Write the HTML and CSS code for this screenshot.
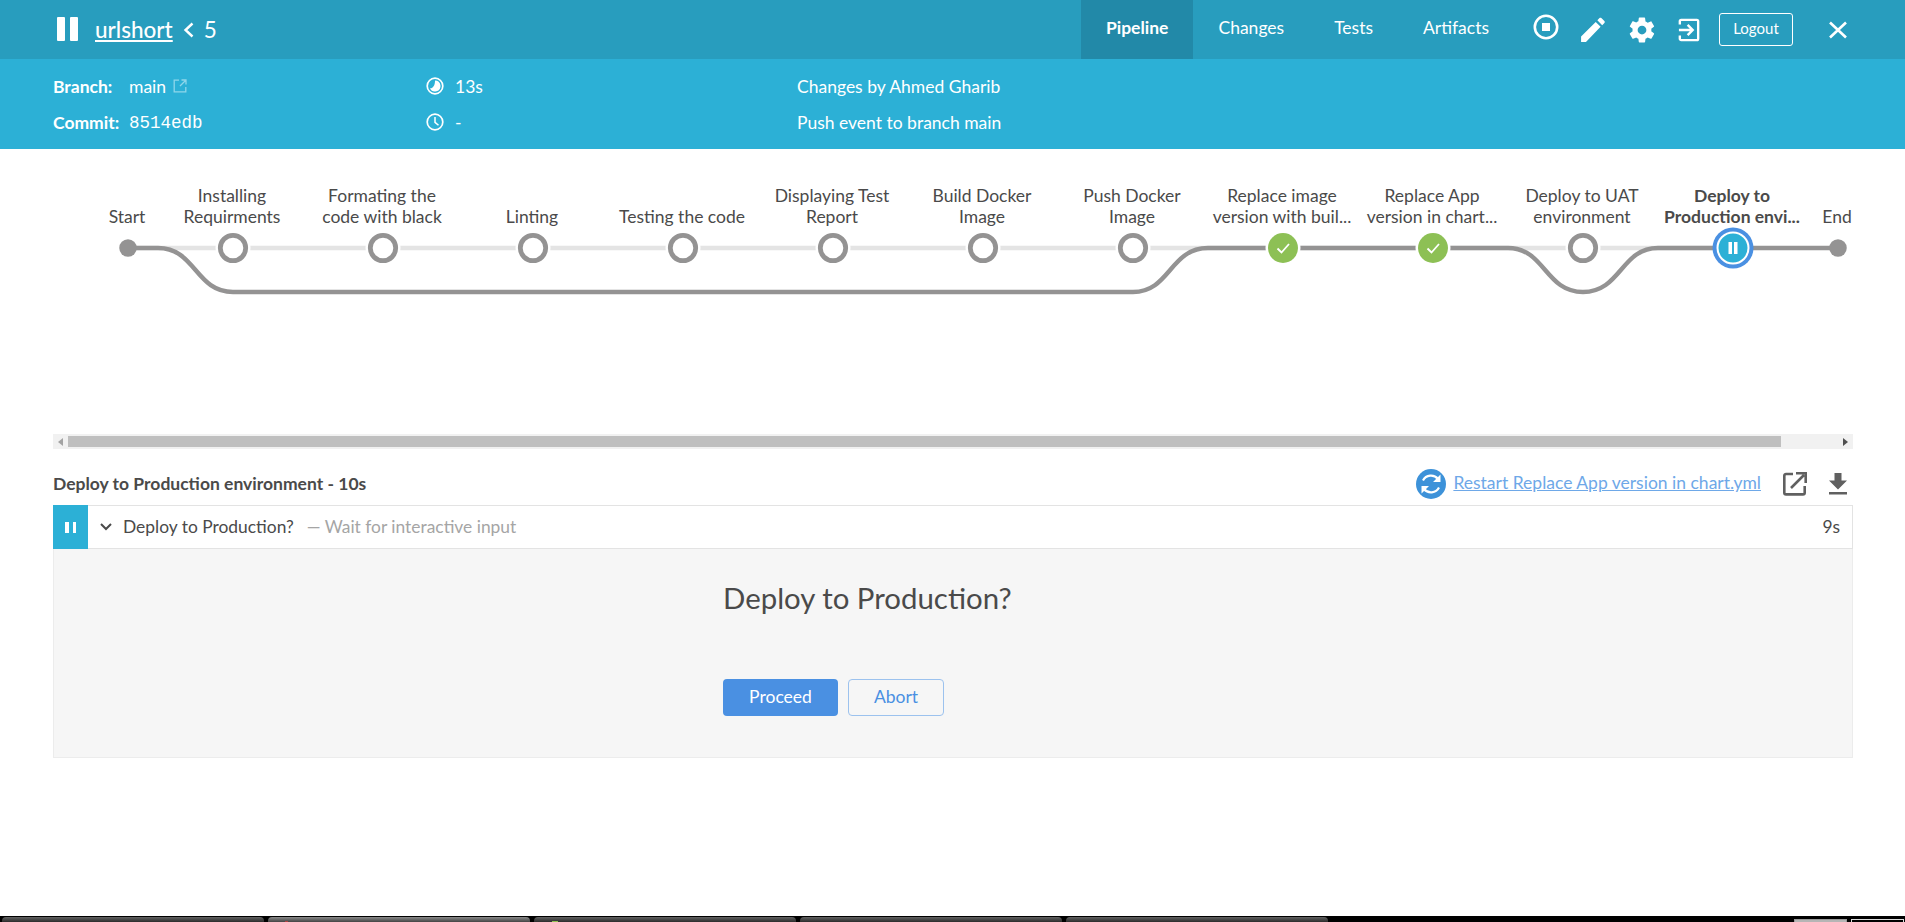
FILE: index.html
```html
<!DOCTYPE html>
<html lang="en">
<head>
    <meta charset="UTF-8">
    <meta name="viewport" content="width=device-width, initial-scale=1.0">
    <title>urlshort 5</title>
    <link rel="stylesheet" href="styles.css">
</head>
<body>
    <header class="run-top">
        <svg class="run-status" width="24" height="24" viewBox="0 0 24 24"><rect x="1" y="0" width="8" height="24" rx="1"/><rect x="14" y="0" width="8" height="24" rx="1"/></svg>
        <a class="run-name" href="#">urlshort</a>
        <svg class="run-sep" width="11" height="16" viewBox="0 0 11 16"><path d="M9.5 1.5 2.5 8l7 6.5" fill="none" stroke="#fff" stroke-width="2.4"/></svg>
        <span class="run-id">5</span>
        <nav class="tabs">
            <a class="tab active" href="#">Pipeline</a>
            <a class="tab" href="#">Changes</a>
            <a class="tab" href="#">Tests</a>
            <a class="tab" href="#">Artifacts</a>
        </nav>
        <div class="actions">
            <svg class="act act-stop" width="26" height="26" viewBox="0 0 26 26"><circle cx="13" cy="13" r="11.2" fill="none" stroke="#fff" stroke-width="2.6"/><rect x="9" y="9" width="8" height="8" fill="#fff"/></svg>
            <svg class="act act-edit" width="26" height="26" viewBox="0 0 24 24"><path fill="#fff" d="M1 23v-5L14.500 4.500l4.500 4.500L5.500 23zM16 3l2-2c.5-.5 1.200-.5 1.700 0l2.800 2.800c.5.5.5 1.200 0 1.700l-2 2z"/></svg>
            <svg class="act act-gear" width="30" height="30" viewBox="0 0 24 24"><path fill="#fff" d="M19.400 13c.04-.3.1-.7.1-1s-.03-.7-.1-1l2.100-1.600c.2-.15.25-.4.1-.65l-2-3.450c-.1-.2-.4-.3-.6-.2l-2.500 1c-.5-.4-1.050-.7-1.700-1L14.450 2.400c0-.25-.2-.4-.5-.4h-4c-.25 0-.45.15-.5.4l-.35 2.650c-.6.3-1.150.6-1.700 1l-2.500-1c-.2-.1-.5 0-.6.2l-2 3.450c-.15.25-.05.5.1.65L4.500 11c-.05.3-.1.7-.1 1s.05.7.1 1l-2.100 1.650c-.2.15-.25.4-.1.65l2 3.450c.1.2.4.3.6.2l2.500-1c.5.4 1.050.7 1.700 1l.35 2.650c.05.25.25.4.5.4h4c.25 0 .45-.15.5-.4l.35-2.650c.6-.3 1.150-.6 1.700-1l2.500 1c.2.1.5 0 .6-.2l2-3.450c.15-.25.1-.5-.1-.65zM12 15.500a3.500 3.500 0 1 1 0-7 3.500 3.500 0 0 1 0 7z"/></svg>
            <svg class="act act-exit" width="22" height="24" viewBox="0 0 24 26"><path fill="none" stroke="#fff" stroke-width="2.600" d="M2 7V3.500C2 2.500 2.700 2 3.500 2h17c.9 0 1.500.6 1.500 1.500v19c0 .9-.6 1.500-1.500 1.500h-17c-.8 0-1.500-.6-1.500-1.500V19"/><path fill="none" stroke="#fff" stroke-width="2.600" d="M1 13h15M10.500 7.500 16 13l-5.500 5.500"/></svg>
            <button class="logout">Logout</button>
            <svg class="close" width="20" height="20" viewBox="0 0 20 20"><path d="M2 2.500l16 15M18 2.500 2 17.500" stroke="#fff" stroke-width="2.600"/></svg>
        </div>
    </header>

    <section class="run-info">
        <div class="info-col info-branch">
            <div class="info-row"><b class="info-key">Branch:</b><span>main</span>
                <svg class="ext-mini" width="14" height="14" viewBox="0 0 14 14"><path fill="none" stroke="#8fd6ea" stroke-width="1.300" d="M6 1.200H1.200v11.600h11.600V8M7 7l5.800-5.800M8.500 1h4.500v4.500"/></svg>
            </div>
            <div class="info-row"><b class="info-key">Commit:</b><code class="sha">8514edb</code></div>
        </div>
        <div class="info-col info-time">
            <div class="info-row">
                <svg class="time-ico" width="18" height="18" viewBox="0 0 18 18"><circle cx="9" cy="9" r="7.800" fill="none" stroke="#fff" stroke-width="1.700"/><path fill="#fff" d="M9 3.500a5.500 5.500 0 1 1-5 7.800C7 11.500 9.200 8 9 3.500z"/></svg>
                <span>13s</span>
            </div>
            <div class="info-row">
                <svg class="time-ico" width="18" height="18" viewBox="0 0 18 18"><circle cx="9" cy="9" r="7.800" fill="none" stroke="#fff" stroke-width="1.700"/><path fill="none" stroke="#fff" stroke-width="1.500" d="M9 4v5.300l3.500 3"/></svg>
                <span>-</span>
            </div>
        </div>
        <div class="info-col info-cause">
            <div class="info-row">Changes by Ahmed Gharib</div>
            <div class="info-row">Push event to branch main</div>
        </div>
    </section>

    <section class="graph">
        <div class="graph-labels">
            <div class="glabel glabel-edge">Start</div>
            <div class="glabel">Installing<br>Requirments</div>
            <div class="glabel">Formating the<br>code with black</div>
            <div class="glabel">Linting</div>
            <div class="glabel">Testing the code</div>
            <div class="glabel">Displaying Test<br>Report</div>
            <div class="glabel">Build Docker<br>Image</div>
            <div class="glabel">Push Docker<br>Image</div>
            <div class="glabel">Replace image<br>version with buil...</div>
            <div class="glabel">Replace App<br>version in chart...</div>
            <div class="glabel">Deploy to UAT<br>environment</div>
            <div class="glabel glabel-on">Deploy to<br>Production envi...</div>
            <div class="glabel glabel-edge">End</div>
        </div>
        <svg class="graph-svg" width="1905" height="90" viewBox="0 0 1905 90">
            <!-- skipped stages run along the lighter line -->
            <path class="line-off" d="M128 23H1733"/>
            <path class="line-run" d="M128 23H158C195.500 23 195.500 67 233 67H1133C1170 67 1170 23 1208 23H1508C1545 23 1545 67 1583 67C1621 67 1621 23 1658 23H1838"/>
            <circle class="dot" cx="128" cy="23" r="8.750"/>
            <circle class="dot" cx="1838" cy="23" r="8.750"/>
            <g class="ring">
                <circle class="gap" cx="233" cy="23" r="17.500"/><circle cx="233" cy="23" r="12.700"/>
                <circle class="gap" cx="383" cy="23" r="17.500"/><circle cx="383" cy="23" r="12.700"/>
                <circle class="gap" cx="533" cy="23" r="17.500"/><circle cx="533" cy="23" r="12.700"/>
                <circle class="gap" cx="683" cy="23" r="17.500"/><circle cx="683" cy="23" r="12.700"/>
                <circle class="gap" cx="833" cy="23" r="17.500"/><circle cx="833" cy="23" r="12.700"/>
                <circle class="gap" cx="983" cy="23" r="17.500"/><circle cx="983" cy="23" r="12.700"/>
                <circle class="gap" cx="1133" cy="23" r="17.500"/><circle cx="1133" cy="23" r="12.700"/>
                <circle class="gap" cx="1583" cy="23" r="17.500"/><circle cx="1583" cy="23" r="12.700"/>
            </g>
            <g class="ok">
                <circle cx="1283" cy="23" r="17.500"/><circle class="ok-fill" cx="1283" cy="23" r="15"/><path d="M1277.500 23.500l4 4 7.500-8.500"/>
                <circle cx="1433" cy="23" r="17.500"/><circle class="ok-fill" cx="1433" cy="23" r="15"/><path d="M1427.500 23.500l4 4 7.500-8.500"/>
            </g>
            <circle class="now-outer" cx="1733" cy="23" r="20.500"/>
            <circle class="now-inner" cx="1733" cy="23" r="15.500"/>
            <rect class="now-bar" x="1728.500" y="17" width="3.500" height="12"/>
            <rect class="now-bar" x="1734" y="17" width="3.500" height="12"/>
        </svg>
    </section>

    <div class="hscroll">
        <span class="arrow arrow-left"></span>
        <span class="thumb"></span>
        <span class="arrow arrow-right"></span>
    </div>

    <section class="step-head">
        <h3 class="step-title">Deploy to Production environment - 10s</h3>
        <svg class="restart-ico" width="30" height="30" viewBox="0 0 30 30"><circle cx="15" cy="15" r="15" fill="#3d92d9"/><path fill="none" stroke="#fff" stroke-width="2.200" d="M7 11.500a9 9 0 0 1 15-1.500M23 18.500a9 9 0 0 1-15 1.500"/><path fill="#fff" d="M24.500 5.500V13h-7.500zM5.500 24.500V17H13z"/></svg>
        <a class="restart-link" href="#">Restart Replace App version in chart.yml</a>
        <svg class="open-ico" width="24" height="24" viewBox="0 0 24 24"><path fill="none" stroke="#606060" stroke-width="2.600" d="M10 2H3c-.9 0-1.700.7-1.700 1.700v17c0 1 .8 1.700 1.700 1.700h17c1 0 1.700-.7 1.700-1.700V14M8 16 21 3M13 1.300h9.700V11"/></svg>
        <svg class="save-ico" width="18" height="22" viewBox="0 0 18 22"><path fill="#606060" d="M5.500 0h7v7.500H18L9 16.500 0 7.500h5.500zM0 19h18v2.600H0z"/></svg>
    </section>

    <section class="step">
        <div class="step-row">
            <span class="step-state"><i></i><i></i></span>
            <svg class="chevron" width="12" height="8" viewBox="0 0 12 8"><path d="M1 1l5 5 5-5" fill="none" stroke="#4a4a4a" stroke-width="2"/></svg>
            <span class="step-name">Deploy to Production?</span>
            <span class="step-note">— Wait for interactive input</span>
            <span class="step-time">9s</span>
        </div>
        <div class="step-body">
            <h2 class="prompt">Deploy to Production?</h2>
            <div class="prompt-btns">
                <button class="btn btn-go">Proceed</button>
                <button class="btn btn-abort">Abort</button>
            </div>
        </div>
    </section>

    <footer class="taskbar">
        <span class="task"></span>
        <span class="task task-on"></span>
        <span class="task task-mark"></span>
        <span class="task"></span>
        <span class="task"></span>
        <span class="desk desk-on"></span>
        <span class="desk"></span>
    </footer>
</body>
</html>
```

FILE: styles.css
```css
* { box-sizing: border-box; }
html, body { height: 100%; }
body { margin: 0; height: 922px; overflow: hidden; display: flex; flex-direction: column; font-family: Lato, "Liberation Sans", sans-serif; font-size: 17.5px; color: #4a4a4a; background: #fff; }
a { color: inherit; }

.run-top { height: 59px; flex: none; display: flex; align-items: stretch; background: #289dbe; color: #fff; padding-left: 56px; }
.run-status { fill: #fff; margin: 17px 0 0 0; }
.run-name { align-self: center; margin-left: 15px; font-size: 22.5px; font-weight: 500; color: #fff; }
.run-sep { align-self: center; margin: 0 0 0 10px; }
.run-id { align-self: center; margin-left: 10px; font-size: 22.5px; }
.tabs { display: flex; margin-left: auto; }
.tab { display: flex; align-items: center; padding: 0 25px 5px; color: #fff; text-decoration: none; }
.tab.active { background: #2289a8; font-weight: 700; }
.actions { display: flex; align-items: center; width: 391px; padding-left: 19px; }
.act { flex: none; }
.act-stop { margin-bottom: 6px; }
.act-edit { margin-left: 21px; }
.act-gear { margin-left: 21px; }
.act-exit { margin-left: 21px; }
.logout { width: 74px; height: 33px; margin: 0 0 0 19px; padding-bottom: 5px; background: transparent; border: 1px solid #fff; border-radius: 3px; color: #fff; font: 15px Lato, sans-serif; }
.close { margin-left: 35px; }

.run-info { height: 90px; flex: none; display: flex; background: #2cb0d6; color: #fff; padding: 9px 0 0 53px; }
.info-col { display: flex; flex-direction: column; }
.info-row { height: 36px; display: flex; align-items: center; }
.info-branch { width: 373px; }
.info-time { width: 371px; }
.info-key { width: 76px; font-weight: 700; }
.ext-mini { margin-left: 7px; }
.sha { padding-top: 2px; font-family: "Liberation Mono", monospace; font-size: 17.5px; }
.time-ico { margin-right: 11px; }

.graph { height: 285px; flex: none; }
.graph-labels { display: flex; align-items: flex-end; height: 78px; padding-left: 97px; }
.glabel { width: 150px; flex: none; text-align: center; line-height: 21px; white-space: nowrap; }
.glabel-edge { width: 60px; }
.glabel-on { font-weight: 700; }
.graph-svg { display: block; margin-top: -2px; }
.line-off { fill: none; stroke: #e4e4e4; stroke-width: 4.4; }
.line-run { fill: none; stroke: #949393; stroke-width: 4.4; }
.dot { fill: #949393; }
.ring circle { fill: #fff; stroke: #949393; stroke-width: 4.8; }
.ring .gap { fill: #fff; stroke: none; }
.ok circle { fill: #fff; }
.ok .ok-fill { fill: #8dc055; }
.ok path { fill: none; stroke: #fff; stroke-width: 1.800; }
.now-outer { fill: #4a90e2; }
.now-inner { fill: #2cb0d6; stroke: #fff; stroke-width: 2; }
.now-bar { fill: #fff; }

.hscroll { height: 15px; flex: none; margin: 0 52px 0 53px; display: flex; align-items: center; background: #f1f1f1; }
.arrow { flex: none; width: 0; height: 0; border-top: 4px solid transparent; border-bottom: 4px solid transparent; }
.arrow-left { margin: 0 5px 0 5px; border-right: 5px solid #a3a3a3; }
.thumb { width: 1713px; height: 11px; background: #bfbfbf; }
.arrow-right { margin-left: auto; margin-right: 5px; border-left: 5px solid #505050; }

.step-head { height: 56px; flex: none; display: flex; align-items: center; margin: 0 58px 0 53px; padding-top: 14px; }
.step-title { margin: 0 auto 1px 0; font-size: 17.5px; font-weight: 700; }
.restart-ico { margin-right: 7px; }
.restart-link { margin-bottom: 3px; color: #6ea8e8; font-size: 17.5px; }
.open-ico { margin-left: 22px; }
.save-ico { margin-left: 22px; }

.step { margin: 0 52px 0 53px; flex: none; }
.step-row { height: 44px; display: flex; align-items: center; background: #fff; border: 1px solid #e3e3e3; border-left: 0; padding-right: 12px; font-size: 17.4px; }
.step-state { width: 35px; align-self: stretch; margin-top: -1px; margin-bottom: -1px; display: flex; align-items: center; justify-content: center; gap: 4px; background: #2cb0d6; }
.step-state i { width: 3.500px; height: 11px; background: #fff; }
.chevron { margin-left: 12px; }
.step-name { margin-left: 11px; padding-bottom: 2px; }
.step-note { margin-left: 13px; padding-bottom: 2px; color: #a5a5a5; }
.step-time { margin-left: auto; padding-bottom: 2px; }
.step-body { height: 209px; padding: 31px 0 0 669px; background: #f6f6f6; border: 1px solid #ececec; border-top: 0; }
.prompt { margin: 0; font-size: 29.4px; font-weight: 400; line-height: 36px; color: #4a4a4a; }
.prompt-btns { display: flex; gap: 10px; margin-top: 63px; }
.btn { height: 37px; padding-bottom: 3px; border-radius: 4px; font: 17.5px Lato, sans-serif; }
.btn-go { width: 115px; background: #4a90e2; border: 0; color: #fff; }
.btn-abort { width: 96px; background: transparent; border: 1px solid #9cc2ee; color: #4a90e2; }

.taskbar { margin-top: auto; height: 6px; flex: none; display: flex; align-items: flex-start; gap: 4px; background: #000; padding: 1px 1px 0 2px; }
.task { width: 262px; height: 5px; border-radius: 4px 4px 0 0; background: linear-gradient(#626262, #2c2c2c); }
.task-on { background: linear-gradient(#b04040, #b04040) 17px 100%/3px 1px no-repeat, linear-gradient(#8a8a8a, #444); }
.task-mark { background: linear-gradient(#8fc04f, #8fc04f) 18px 100%/6px 1px no-repeat, linear-gradient(#626262, #2c2c2c); }
.desk { width: 53px; height: 3px; margin-top: 2px; border: 1px solid #ddd; border-bottom: 0; background: #000; }
.desk-on { margin-left: auto; background: #b5b5b5; border-color: #999; }
```
